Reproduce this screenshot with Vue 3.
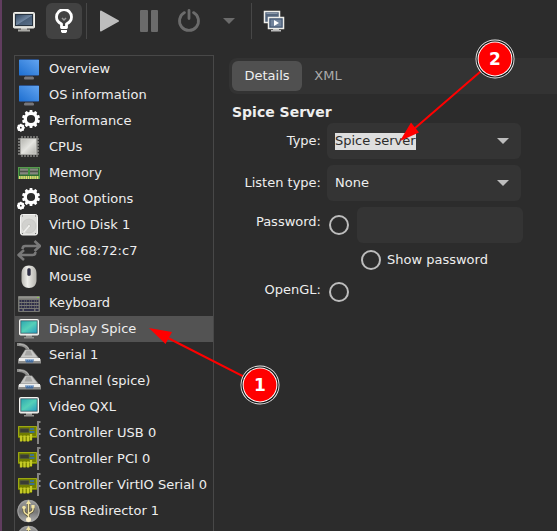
<script setup>
import { ref } from 'vue'

const devices = [
  { name: 'Overview', icon: 'screen' },
  { name: 'OS information', icon: 'screen' },
  { name: 'Performance', icon: 'gears' },
  { name: 'CPUs', icon: 'cpu' },
  { name: 'Memory', icon: 'memory' },
  { name: 'Boot Options', icon: 'gears' },
  { name: 'VirtIO Disk 1', icon: 'disk' },
  { name: 'NIC :68:72:c7', icon: 'nic' },
  { name: 'Mouse', icon: 'mouse' },
  { name: 'Keyboard', icon: 'keyboard' },
  { name: 'Display Spice', icon: 'display' },
  { name: 'Serial 1', icon: 'serial' },
  { name: 'Channel (spice)', icon: 'serial' },
  { name: 'Video QXL', icon: 'display' },
  { name: 'Controller USB 0', icon: 'card' },
  { name: 'Controller PCI 0', icon: 'card' },
  { name: 'Controller VirtIO Serial 0', icon: 'card' },
  { name: 'USB Redirector 1', icon: 'usb' },
  { name: 'USB Redirector 2', icon: 'usb' }
]
const selected = ref('Display Spice')
const tab = ref('Details')
const teeth = [0, 36, 72, 108, 144, 180, 216, 252, 288, 324]
const smallTeeth = [0, 45, 90, 135, 180, 225, 270, 315]
</script>

<template>
  <div class="window">
    <svg class="defs" width="0" height="0" aria-hidden="true">
      <defs>
        <linearGradient id="gBlue" x1="0" y1="1" x2="1" y2="0">
          <stop offset="0" stop-color="#1e6fd0" /><stop offset="1" stop-color="#62a4f0" />
        </linearGradient>
        <linearGradient id="gTeal" x1="0" y1="0" x2="1" y2="1">
          <stop offset="0" stop-color="#2fa9b0" /><stop offset=".5" stop-color="#55d0b8" /><stop offset="1" stop-color="#2a9fc0" />
        </linearGradient>
        <linearGradient id="gSlate" x1="0" y1="0" x2="1" y2="1">
          <stop offset="0" stop-color="#33475f" /><stop offset=".5" stop-color="#7086a0" /><stop offset=".55" stop-color="#4a6079" /><stop offset="1" stop-color="#5b7089" />
        </linearGradient>
        <linearGradient id="gSilver" x1="0" y1="0" x2="1" y2="1">
          <stop offset="0" stop-color="#b5b5b0" /><stop offset=".5" stop-color="#e4e4e0" /><stop offset="1" stop-color="#b0b0ab" />
        </linearGradient>
        <linearGradient id="gMouse" x1="0" y1="0" x2="1" y2="0">
          <stop offset="0" stop-color="#b9b8b2" /><stop offset=".4" stop-color="#eeeeea" /><stop offset="1" stop-color="#b4b3ad" />
        </linearGradient>
        <linearGradient id="gBall" x1="0" y1="0" x2="0" y2="1">
          <stop offset="0" stop-color="#9a9a9a" /><stop offset=".55" stop-color="#777" /><stop offset="1" stop-color="#b5b5b5" />
        </linearGradient>

        <symbol id="screen" viewBox="0 0 24 24">
          <rect x="8" y="19" width="8" height="2" fill="#4d4d52" />
          <rect x="7" y="20" width="10" height="2.5" rx="1" fill="#77777b" />
          <rect x="2" y="2" width="20" height="17" rx="1" fill="#2b4f86" />
          <rect x="2" y="3" width="20" height="15" fill="url(#gBlue)" />
        </symbol>

        <symbol id="gears" viewBox="0 0 24 24">
          <circle cx="14" cy="10" r="5.7" fill="none" stroke="#fff" stroke-width="3.2" />
          <rect v-for="a in teeth" :key="a" x="12.5" y="1" width="3" height="3.5" rx=".8" fill="#fff" :transform="`rotate(${a} 14 10)`" />
          <circle cx="3.8" cy="18.7" r="2.2" fill="none" stroke="#fff" stroke-width="2.6" />
          <rect v-for="a in smallTeeth" :key="'s' + a" x="3" y="14.8" width="1.6" height="1.6" fill="#fff" :transform="`rotate(${a} 3.8 18.7)`" />
        </symbol>

        <symbol id="cpu" viewBox="0 0 24 24">
          <path d="M5 1v21M8 1v21M11 1v21M14 1v21M17 1v21M20 1v21M1 4h21M1 7h21M1 10h21M1 13h21M1 16h21M1 19h21" stroke="#8b8b88" stroke-width="1.4" />
          <rect x="3" y="3" width="17" height="17" fill="#8f8f8b" />
          <rect x="4" y="4" width="15" height="15" fill="url(#gSilver)" stroke="#d7d7d2" stroke-width=".6" />
        </symbol>

        <symbol id="memory" viewBox="0 0 24 24">
          <rect x="1" y="6" width="22" height="12" fill="#559a4c" />
          <rect x="2" y="7" width="20" height="8" fill="#2e6b31" />
          <path d="M3 7.5h8v6H3zM13 7.5h8v6h-8z" fill="#85877f" />
          <path d="M3 10.5h8M13 10.5h8" stroke="#4d514a" stroke-width="1.5" />
          <path d="M12 7v7" stroke="#48b644" stroke-width="1" />
          <path d="M2 16.5h20" stroke="#e2da72" stroke-width="3" stroke-dasharray="1.5 .7" />
        </symbol>

        <symbol id="disk" viewBox="0 0 24 24">
          <rect x="3.5" y="1.5" width="17" height="20.5" rx="2" fill="#dededb" stroke="#f3f3f1" />
          <circle cx="12" cy="13" r="7" fill="#d1d1ce" stroke="#c3c3c0" stroke-width=".6" />
          <circle cx="12" cy="13" r="1.6" fill="#e8e8e5" stroke="#b8b8b5" stroke-width=".5" />
          <path d="M12 13l-5 6" stroke="#f0f0ee" stroke-width="1.4" />
          <path d="M5 3h1M18 3h1M5 20.5h1M18 20.5h1" stroke="#777" />
        </symbol>

        <symbol id="nic" viewBox="0 0 24 24">
          <path d="M5.500 10c0-2 .8-3 2.800-3H23M17.500 2 23 7l-5.500 5M18.500 13c0 2-.8 3-2.800 3H1.500M7 11l-5.500 5L7 21" fill="none" stroke="#797979" stroke-width="2.500" stroke-linejoin="round" />
        </symbol>

        <symbol id="mouse" viewBox="0 0 24 24">
          <path d="M12 .5c5 0 7.500 3 7.500 8.500v6c0 5-3 8-7.500 8s-7.500-3-7.500-8V9C4.500 3.500 7 .5 12 .5z" fill="url(#gMouse)" />
          <rect x="10" y="3" width="4" height="8" rx="2" fill="#9a9a98" />
          <rect x="10.500" y="3.200" width="3" height="7.500" rx="1.500" fill="#303048" />
        </symbol>

        <symbol id="keyboard" viewBox="0 0 24 24">
          <rect x="1" y="5" width="22" height="16" rx="1" fill="#777873" />
          <rect x="1.500" y="5.500" width="21" height="2" fill="#92928d" />
          <path d="M2.500 10h19M2.500 13h19M2.500 16h19" stroke="#30304a" stroke-width="2.100" stroke-dasharray="2 .5" />
          <path d="M2.500 19h3M7 19h10M18.500 19h3" stroke="#30304a" stroke-width="2" />
          <path d="M20 6.500h2" stroke="#8ac44d" />
        </symbol>

        <symbol id="display" viewBox="0 0 24 24">
          <path d="M9 18h6v2h2v1.500H7V20h2z" fill="#90908d" />
          <rect x="2.500" y="2.500" width="19" height="15.500" rx="1" fill="#e5e5e1" stroke="#f5f5f2" />
          <rect x="3.500" y="3.500" width="17" height="13" fill="#1e4654" />
          <rect x="4.200" y="4.200" width="15.600" height="11.600" fill="url(#gTeal)" />
        </symbol>

        <symbol id="serial" viewBox="0 0 24 24">
          <path d="M0 1.500c7-.5 11 2 12 8" fill="none" stroke="#8f8f8d" stroke-width="3" />
          <path d="M2 1.200c6 .3 9.500 2.500 10.500 7" fill="none" stroke="#b4b4b2" stroke-width="1" />
          <path d="M8 6.500h7l7 8.500 2 1.500v4H1v-4L3.500 14z" fill="#8e8e8c" />
          <path d="M8.500 7h6l6 7.500H3.500z" fill="#c8c8c6" />
          <path d="M9.500 7.500h4l2 5h-8z" fill="#a5a5a3" />
          <path d="M2 15h21v3H2z" fill="#ededeb" />
          <path d="M8 16.500h9l-1 3h-7z" fill="#466d9c" />
          <path d="M8.500 17h8" stroke="#8fb9e8" stroke-width="1.200" stroke-dasharray="1.500 .7" />
        </symbol>

        <symbol id="card" viewBox="0 0 24 24">
          <path d="M1 5h19v12h-5v3H3v-3H1z" fill="#717d00" />
          <path d="M1.500 5.500h18v10h-18z" fill="none" stroke="#9ca812" />
          <path d="M4 14.500v6M7.500 14.500v6M11 14.500v6M14 13v6" stroke="#c5ca27" stroke-width="2.300" />
          <rect x="3" y="7.500" width="9" height="4" rx=".5" fill="#3a3d34" stroke="#545a3b" stroke-width=".7" />
          <path d="M13 8h4M12.500 11h5" stroke="#3d708e" stroke-width="2" />
          <path d="M23.500 1H21v22" fill="none" stroke="#858582" stroke-width="2" />
          <path d="M22.800 7v2M22.800 12v2" stroke="#aaa" stroke-width="1.200" />
        </symbol>

        <symbol id="usb" viewBox="0 0 24 24">
          <circle cx="11.500" cy="12" r="11.300" fill="url(#gBall)" />
          <circle cx="11.500" cy="12" r="10.600" fill="none" stroke="#a5a5a5" stroke-width=".8" />
          <path d="M11.500 4v16M11.500 17c-1-2-4.500-2-4.500-5V9M11.500 15c1-2 4.500-1.500 4.500-4.500V8" fill="none" stroke="#564f37" stroke-width="2.800" />
          <path d="M11.500 4v16M11.500 17c-1-2-4.500-2-4.500-5V9M11.500 15c1-2 4.500-1.500 4.500-4.500V8" fill="none" stroke="#f1e3a2" stroke-width="1.500" />
          <path d="M11.500 1 14 5H9z" fill="#f1e3a2" />
          <circle cx="7" cy="8.500" r="1.800" fill="#f1e3a2" />
          <path d="M14.400 6h3.200v3.200h-3.200z" fill="#f1e3a2" />
          <circle cx="11.500" cy="20.500" r="2.500" fill="#fff4cf" />
        </symbol>
      </defs>
    </svg>

    <header class="toolbar">
      <button class="tool" aria-label="Console">
        <svg width="24" height="24" viewBox="0 0 24 24">
          <path d="M9 19h6v1.500h3v2H6v-2h3z" fill="#a9a9a5" />
          <rect x="1.500" y="3.500" width="21" height="15.500" rx="1" fill="#d7d7d2" stroke="#f1f1ed" />
          <rect x="3" y="5" width="18" height="12" fill="#26323f" />
          <rect x="4" y="6" width="16" height="10" fill="url(#gSlate)" />
        </svg>
      </button>
      <button class="tool active" aria-label="Details" aria-pressed="true">
        <svg width="24" height="24" viewBox="0 0 24 24">
          <path d="M9.500 18.500v-3.500C6.500 13.500 4.500 11.500 4.500 8a7.500 7.500 0 0 1 15 0c0 3.500-2 5.500-5 7v3.500z" fill="none" stroke="#fff" stroke-width="2.800" stroke-linejoin="round" />
          <path d="M9 21h6v1.500l-1 1.500h-4l-1-1.500z" fill="#fff" />
          <path d="M10 9 12 11l2-2" fill="none" stroke="#999" stroke-width="1.500" />
        </svg>
      </button>
      <span class="divider"></span>
      <button class="tool" aria-label="Run">
        <svg width="24" height="24" viewBox="0 0 24 24"><path d="M4 2.500 21 12 4 21.500z" fill="#bdbdbd" stroke="#bdbdbd" stroke-width="2" stroke-linejoin="round" /></svg>
      </button>
      <button class="tool" aria-label="Pause">
        <svg width="24" height="24" viewBox="0 0 24 24"><path d="M4 1h6q1 0 1 1v20q0 1-1 1H4q-1 0-1-1V2q0-1 1-1zM15 1h5q1 0 1 1v20q0 1-1 1h-5q-1 0-1-1V2q0-1 1-1z" fill="#6b6b6b" /></svg>
      </button>
      <button class="tool" aria-label="Shut down">
        <svg width="24" height="24" viewBox="0 0 24 24"><path d="M7.500 3.600a9.500 9.500 0 1 0 9 0M12 1.500v8" fill="none" stroke="#6b6b6b" stroke-width="2.800" stroke-linecap="round" /></svg>
      </button>
      <button class="tool" aria-label="Shut down options">
        <svg width="24" height="24" viewBox="0 0 24 24"><path d="M6 9h12l-6 6z" fill="#6b6b6b" /></svg>
      </button>
      <span class="divider"></span>
      <button class="tool" aria-label="Snapshots">
        <svg width="24" height="24" viewBox="0 0 24 24">
          <path d="M2.500 2.500h15v11h-15z" fill="#53657c" stroke="#eeeeea" stroke-width="1.500" />
          <path d="M4.500 4.500h11" stroke="#8795a7" />
          <path d="M11 19h6v2h2v1.500H9V21h2z" fill="#bababa" />
          <path d="M6.500 8.500h15v11h-15z" fill="#415571" stroke="#eeeeea" stroke-width="1.500" />
          <path d="M8.500 10.500h11v7h-11z" fill="#71839b" />
          <path d="m12 11 5 3-5 3z" fill="#fff" />
        </svg>
      </button>
    </header>

    <div class="content">
      <ul class="devices">
        <li v-for="d in devices" :key="d.name">
          <button class="device" :class="{ selected: selected === d.name }" @click="selected = d.name">
            <svg class="icon" width="24" height="24" aria-hidden="true"><use :href="'#' + d.icon" /></svg>
            <span>{{ d.name }}</span>
          </button>
        </li>
      </ul>

      <main class="panel">
        <nav class="tabs">
          <button v-for="t in ['Details', 'XML']" :key="t" class="tab" :class="{ current: tab === t }" @click="tab = t">{{ t }}</button>
        </nav>
        <h2>Spice Server</h2>
        <form class="form" @submit.prevent>
          <label class="name" for="type">Type:</label>
          <div class="combo highlighted">
            <select id="type"><option>Spice server</option></select>
            <svg width="12" height="6" viewBox="0 0 12 6" aria-hidden="true"><path d="M0 0h12L6 6z" fill="#bdbdbd" /></svg>
          </div>

          <label class="name" for="listen">Listen type:</label>
          <div class="combo">
            <select id="listen"><option>None</option></select>
            <svg width="12" height="6" viewBox="0 0 12 6" aria-hidden="true"><path d="M0 0h12L6 6z" fill="#bdbdbd" /></svg>
          </div>

          <label class="name raised" for="usepw">Password:</label>
          <div class="password">
            <input id="usepw" type="checkbox" />
            <input class="entry" type="password" aria-label="Password value" />
          </div>

          <div class="show">
            <input id="showpw" type="checkbox" />
            <label for="showpw">Show password</label>
          </div>

          <label class="name" for="opengl">OpenGL:</label>
          <div class="opengl"><input id="opengl" type="checkbox" /></div>
        </form>
      </main>
    </div>

    <svg class="callouts" width="557" height="531" viewBox="0 0 557 531">
      <g stroke="#f00" stroke-width="2" fill="#f00">
        <path d="M260 385 168 338M495 59 414 129" />
        <path d="m149 328 23 4-6.500 12zM400 141l11-18.500 8 10z" stroke="none" />
      </g>
      <g v-for="c in [{ x: 260, y: 385, n: 1 }, { x: 495, y: 59, n: 2 }]" :key="c.n">
        <circle :cx="c.x" :cy="c.y" r="19.500" fill="#eee" />
        <circle :cx="c.x" :cy="c.y" r="18.600" fill="#111" />
        <circle :cx="c.x" :cy="c.y" r="17.400" fill="#fff" />
        <circle :cx="c.x" :cy="c.y" r="16.400" fill="#f00" />
        <text :x="c.x" :y="c.y + 6" class="number">{{ c.n }}</text>
      </g>
    </svg>
  </div>
</template>

<style>
body {
  background: #2c2c2c;
}
</style>

<style scoped>
* {
  box-sizing: border-box;
}
.window {
  position: relative;
  display: flex;
  flex-direction: column;
  height: 100vh;
  overflow: hidden;
  border-left: 2px solid #613d5f;
  background: #2c2c2c;
  color: #eee;
  font: 13px/16px "DejaVu Sans", sans-serif;
}
.defs {
  position: absolute;
}
button,
select,
input {
  margin: 0;
  border: 0;
  padding: 0;
  background: none;
  color: inherit;
  font: inherit;
}
.toolbar {
  display: flex;
  flex: none;
  gap: 4px;
  padding: 3px 4px 16px;
}
.tool {
  display: flex;
  align-items: center;
  justify-content: center;
  width: 36px;
  height: 36px;
  border-radius: 6px;
}
.tool.active {
  background: #424242;
}
.divider {
  width: 1px;
  background: #474747;
}
.content {
  display: flex;
  flex: 1;
  min-height: 0;
  padding-left: 12px;
}
.devices {
  flex: none;
  width: 200px;
  margin: 0;
  padding: 0;
  overflow: hidden;
  border: solid #484848;
  border-width: 1px 1px 0;
  list-style: none;
}
.device {
  display: flex;
  align-items: center;
  gap: 8px;
  width: 100%;
  height: 26px;
  padding-left: 2px;
  text-align: left;
  white-space: nowrap;
}
.device.selected {
  background: #535353;
}
.icon {
  flex: none;
}
.panel {
  flex: 1;
  min-width: 0;
  padding: 3px 0 0 15px;
}
.tabs {
  display: flex;
  padding: 3px;
  border-radius: 8px 0 0 8px;
  background: #333;
}
.tab {
  min-width: 52px;
  height: 30px;
  padding: 0 12px;
  border-radius: 6px;
  color: #aaa;
}
.tab.current {
  min-width: 70px;
  background: #505050;
  color: #eee;
}
h2 {
  margin: 10px 3px 3px;
  font-size: 14px;
  line-height: 16px;
}
.form {
  display: grid;
  grid-template-columns: 92px minmax(0, 196px);
  column-gap: 6px;
  row-gap: 6px;
}
.name {
  align-self: center;
  text-align: right;
}
.raised {
  padding-bottom: 6px;
}
.combo {
  display: flex;
  align-items: center;
  justify-content: space-between;
  height: 36px;
  margin-right: 2px;
  padding: 0 12px 0 8px;
  border-radius: 6px;
  background: #343434;
}
.combo select {
  appearance: none;
  height: 17px;
}
.highlighted select {
  background: #dedede;
  color: #2c2c2c;
}
.password {
  display: flex;
  align-items: center;
  gap: 8px;
  padding-left: 2px;
}
.entry {
  flex: 1;
  min-width: 0;
  height: 36px;
  border-radius: 6px;
  background: #343434;
}
.show {
  display: flex;
  grid-column: 2;
  align-items: center;
  gap: 6px;
  height: 22px;
  padding-left: 34px;
}
.opengl {
  display: flex;
  align-items: center;
  padding: 5px 0 0 2px;
}
input[type="checkbox"] {
  flex: none;
  appearance: none;
  width: 20px;
  height: 20px;
  border: 2px solid #bdbdbd;
  border-radius: 50%;
}
.callouts {
  position: absolute;
  top: 0;
  left: -2px;
  pointer-events: none;
}
.number {
  fill: #fff;
  font-size: 17px;
  font-weight: bold;
  text-anchor: middle;
}
</style>
